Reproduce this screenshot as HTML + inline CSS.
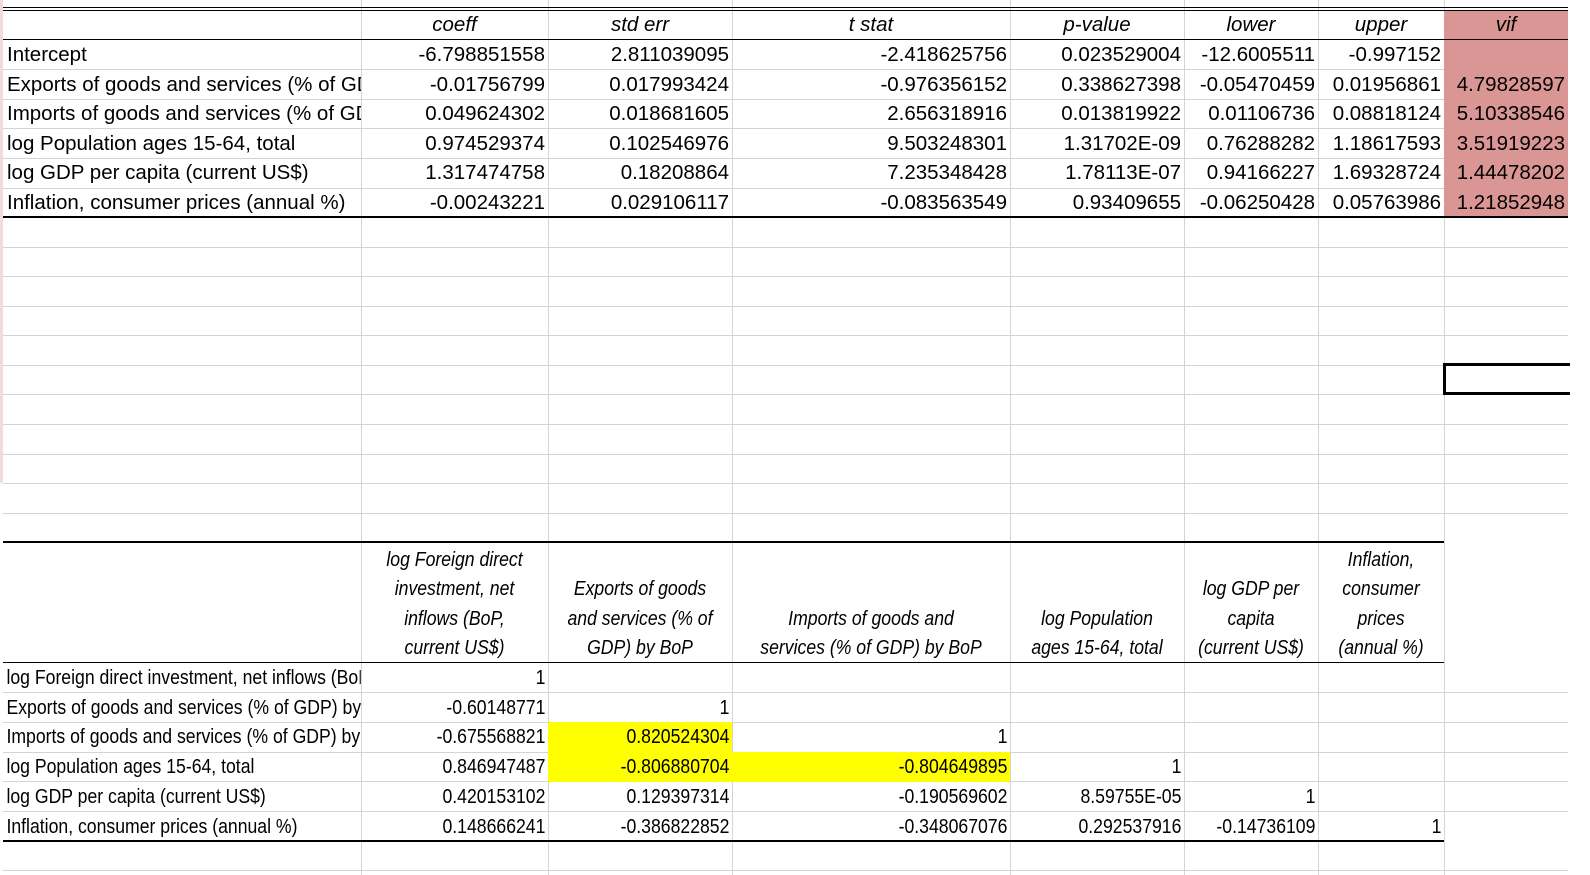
<!DOCTYPE html>
<html><head><meta charset="utf-8"><style>
body{margin:0;width:1590px;height:875px;background:#fff;position:relative;overflow:hidden;font-family:"Liberation Sans",Arial,sans-serif;font-size:20.5px;color:#000}
div{position:absolute;box-sizing:border-box}
.v{width:1px;background:#d4d4d4;top:0;height:875px}
.h{height:1px;background:#d4d4d4;left:3px;width:1565px}
.k{background:#000}
.c{height:29.6px;line-height:29.6px;white-space:nowrap;overflow:hidden;text-align:right;padding-right:3px}
.l{text-align:left;padding-left:4px}
.i{font-style:italic;text-align:center;padding:0}
.b{transform:scaleX(.86);transform-origin:right center}
.b.l{transform-origin:left center;width:416px}
.hd{font-style:italic;text-align:center;line-height:29.6px;display:flex;flex-direction:column;justify-content:flex-end;height:120px;top:543px;transform:scaleX(.86);white-space:nowrap}
.x0{left:3px;width:358px}.x1{left:361px;width:187px}.x2{left:548px;width:184px}.x3{left:732px;width:278px}
.x4{left:1010px;width:174px}.x5{left:1184px;width:134px}.x6{left:1318px;width:126px}.x7{left:1444px;width:124px}
</style></head><body>
<div style="left:0;top:0;width:3px;height:483px;background:#f2dcdb"></div>
<div class="v" style="left:361px"></div><div class="v" style="left:548px"></div><div class="v" style="left:732px"></div>
<div class="v" style="left:1010px"></div><div class="v" style="left:1184px"></div><div class="v" style="left:1318px"></div>
<div class="v" style="left:1444px"></div>
<div class="h" style="top:69px"></div><div class="h" style="top:99px"></div><div class="h" style="top:128px"></div>
<div class="h" style="top:158px"></div><div class="h" style="top:188px"></div><div class="h" style="top:247px"></div>
<div class="h" style="top:276px"></div><div class="h" style="top:306px"></div><div class="h" style="top:335px"></div>
<div class="h" style="top:365px"></div><div class="h" style="top:394px"></div><div class="h" style="top:424px"></div>
<div class="h" style="top:454px"></div><div class="h" style="top:483px"></div><div class="h" style="top:513px"></div>
<div class="h" style="top:692px"></div><div class="h" style="top:722px"></div><div class="h" style="top:752px"></div>
<div class="h" style="top:781px"></div><div class="h" style="top:811px"></div><div class="h" style="top:870px"></div>
<div style="left:1444px;top:10px;width:124px;height:207px;background:#da9694"></div>
<div style="left:548px;top:722px;width:184px;height:30px;background:#ff0"></div>
<div style="left:548px;top:752px;width:462px;height:30px;background:#ff0"></div>
<div class="k" style="left:3px;top:7px;width:1565px;height:1px"></div>
<div class="k" style="left:3px;top:10px;width:1565px;height:1px"></div>
<div class="k" style="left:3px;top:39px;width:1565px;height:1px"></div>
<div class="k" style="left:3px;top:216px;width:1565px;height:2px"></div>
<div class="k" style="left:3px;top:541px;width:1441px;height:2px"></div>
<div class="k" style="left:3px;top:662px;width:1441px;height:1px"></div>
<div class="k" style="left:3px;top:840px;width:1441px;height:2px"></div>
<div style="left:1443px;top:363px;width:127px;height:32px;border:3px solid #000;border-right:none"></div>

<div class="c i x1" style="top:10px">coeff</div><div class="c i x2" style="top:10px">std err</div>
<div class="c i x3" style="top:10px">t stat</div><div class="c i x4" style="top:10px">p-value</div>
<div class="c i x5" style="top:10px">lower</div><div class="c i x6" style="top:10px">upper</div>
<div class="c i x7" style="top:10px">vif</div>

<div class="c l x0" style="top:40px">Intercept</div>
<div class="c x1" style="top:40px">-6.798851558</div><div class="c x2" style="top:40px">2.811039095</div>
<div class="c x3" style="top:40px">-2.418625756</div><div class="c x4" style="top:40px">0.023529004</div>
<div class="c x5" style="top:40px">-12.6005511</div><div class="c x6" style="top:40px">-0.997152</div>

<div class="c l x0" style="top:69.6px">Exports of goods and services (% of GDP) by BoP</div>
<div class="c x1" style="top:69.6px">-0.01756799</div><div class="c x2" style="top:69.6px">0.017993424</div>
<div class="c x3" style="top:69.6px">-0.976356152</div><div class="c x4" style="top:69.6px">0.338627398</div>
<div class="c x5" style="top:69.6px">-0.05470459</div><div class="c x6" style="top:69.6px">0.01956861</div><div class="c x7" style="top:69.6px">4.79828597</div>

<div class="c l x0" style="top:99.2px">Imports of goods and services (% of GDP) by BoP</div>
<div class="c x1" style="top:99.2px">0.049624302</div><div class="c x2" style="top:99.2px">0.018681605</div>
<div class="c x3" style="top:99.2px">2.656318916</div><div class="c x4" style="top:99.2px">0.013819922</div>
<div class="c x5" style="top:99.2px">0.01106736</div><div class="c x6" style="top:99.2px">0.08818124</div><div class="c x7" style="top:99.2px">5.10338546</div>

<div class="c l x0" style="top:128.8px">log Population ages 15-64, total</div>
<div class="c x1" style="top:128.8px">0.974529374</div><div class="c x2" style="top:128.8px">0.102546976</div>
<div class="c x3" style="top:128.8px">9.503248301</div><div class="c x4" style="top:128.8px">1.31702E-09</div>
<div class="c x5" style="top:128.8px">0.76288282</div><div class="c x6" style="top:128.8px">1.18617593</div><div class="c x7" style="top:128.8px">3.51919223</div>

<div class="c l x0" style="top:158.4px">log GDP per capita (current US$)</div>
<div class="c x1" style="top:158.4px">1.317474758</div><div class="c x2" style="top:158.4px">0.18208864</div>
<div class="c x3" style="top:158.4px">7.235348428</div><div class="c x4" style="top:158.4px">1.78113E-07</div>
<div class="c x5" style="top:158.4px">0.94166227</div><div class="c x6" style="top:158.4px">1.69328724</div><div class="c x7" style="top:158.4px">1.44478202</div>

<div class="c l x0" style="top:188px">Inflation, consumer prices (annual %)</div>
<div class="c x1" style="top:188px">-0.00243221</div><div class="c x2" style="top:188px">0.029106117</div>
<div class="c x3" style="top:188px">-0.083563549</div><div class="c x4" style="top:188px">0.93409655</div>
<div class="c x5" style="top:188px">-0.06250428</div><div class="c x6" style="top:188px">0.05763986</div><div class="c x7" style="top:188px">1.21852948</div>

<div class="hd x1"><span>log Foreign direct</span><span>investment, net</span><span>inflows (BoP,</span><span>current US$)</span></div>
<div class="hd x2"><span>Exports of goods</span><span>and services (% of</span><span>GDP) by BoP</span></div>
<div class="hd x3"><span>Imports of goods and</span><span>services (% of GDP) by BoP</span></div>
<div class="hd x4"><span>log Population</span><span>ages 15-64, total</span></div>
<div class="hd x5"><span>log GDP per</span><span>capita</span><span>(current US$)</span></div>
<div class="hd x6"><span>Inflation,</span><span>consumer</span><span>prices</span><span>(annual %)</span></div>

<div class="c l b x0" style="top:663px">log Foreign direct investment, net inflows (BoP, current US$)</div>
<div class="c b x1" style="top:663px">1</div>
<div class="c l b x0" style="top:692.7px">Exports of goods and services (% of GDP) by BoP</div>
<div class="c b x1" style="top:692.7px">-0.60148771</div><div class="c b x2" style="top:692.7px">1</div>
<div class="c l b x0" style="top:722.4px">Imports of goods and services (% of GDP) by BoP</div>
<div class="c b x1" style="top:722.4px">-0.675568821</div><div class="c b x2" style="top:722.4px">0.820524304</div><div class="c b x3" style="top:722.4px">1</div>
<div class="c l b x0" style="top:752.1px">log Population ages 15-64, total</div>
<div class="c b x1" style="top:752.1px">0.846947487</div><div class="c b x2" style="top:752.1px">-0.806880704</div><div class="c b x3" style="top:752.1px">-0.804649895</div><div class="c b x4" style="top:752.1px">1</div>
<div class="c l b x0" style="top:781.8px">log GDP per capita (current US$)</div>
<div class="c b x1" style="top:781.8px">0.420153102</div><div class="c b x2" style="top:781.8px">0.129397314</div><div class="c b x3" style="top:781.8px">-0.190569602</div><div class="c b x4" style="top:781.8px">8.59755E-05</div><div class="c b x5" style="top:781.8px">1</div>
<div class="c l b x0" style="top:811.5px">Inflation, consumer prices (annual %)</div>
<div class="c b x1" style="top:811.5px">0.148666241</div><div class="c b x2" style="top:811.5px">-0.386822852</div><div class="c b x3" style="top:811.5px">-0.348067076</div><div class="c b x4" style="top:811.5px">0.292537916</div><div class="c b x5" style="top:811.5px">-0.14736109</div><div class="c b x6" style="top:811.5px">1</div>
</body></html>
